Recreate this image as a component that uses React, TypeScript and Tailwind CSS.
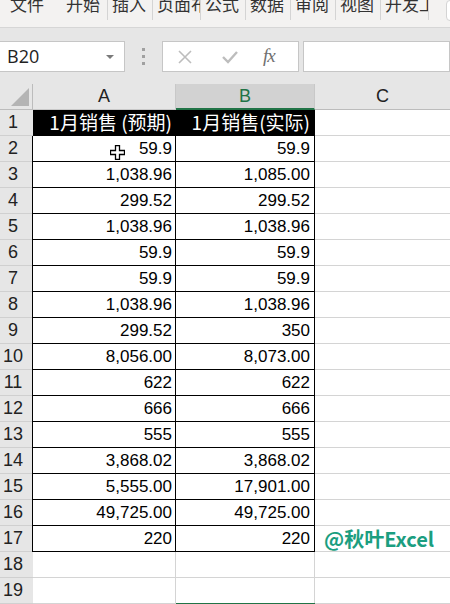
import React from "react";

const data: [string, string][] = [
  ["59.9", "59.9"],
  ["1,038.96", "1,085.00"],
  ["299.52", "299.52"],
  ["1,038.96", "1,038.96"],
  ["59.9", "59.9"],
  ["59.9", "59.9"],
  ["1,038.96", "1,038.96"],
  ["299.52", "350"],
  ["8,056.00", "8,073.00"],
  ["622", "622"],
  ["666", "666"],
  ["555", "555"],
  ["3,868.02", "3,868.02"],
  ["5,555.00", "17,901.00"],
  ["49,725.00", "49,725.00"],
  ["220", "220"],
];

const tabs = ["插入", "页面布局", "公式", "数据", "审阅", "视图", "开发工具"];

const cjk = { fontFamily: '"Noto Sans CJK SC", "Noto Sans", sans-serif' };
const cell = { fontFamily: '"Liberation Sans", "Noto Sans CJK SC", sans-serif' };

function MoveCursor() {
  return (
    <svg width="15" height="15" viewBox="0 0 15 15" className="absolute left-[77px] top-[9px]">
      <path
        d="M5.5 0.5h4v5h5v4h-5v5h-4v-5h-5v-4h5z"
        fill="#fff"
        stroke="#000"
        strokeWidth="1.3"
        strokeLinejoin="miter"
      />
    </svg>
  );
}

function RowHead({ n }: { n: number }) {
  return (
    <div className="h-[26px] bg-[#e6e6e6] border-b border-[#d0d0d0] flex items-center justify-center pr-[7px] text-[18px] text-[#222]">
      {n}
    </div>
  );
}

export default function App() {
  return (
    <div className="w-[450px] h-[604px] overflow-hidden bg-white relative" style={cell}>
      {/* ribbon tabs */}
      <div className="h-[27px] bg-[#f3f2f1] flex items-start text-[17px] text-[#333] overflow-hidden relative" style={cjk}>
        <div className="ml-[10px] -mt-[10px] leading-[28px] w-[56px]">文件</div>
        <div className="-mt-[10px] leading-[28px] w-[41px]">开始</div>
        {tabs.map((t, i) => (
          <div
            key={t}
            className={
              "h-[20px] border-l border-[#d4d4d4] pl-[4px] overflow-hidden whitespace-nowrap " +
              (i === 1 || i === 6 ? "w-[48px]" : "w-[45px]")
            }
          >
            <div className="-mt-[10px] leading-[28px]">{t}</div>
          </div>
        ))}
        <div className="h-[20px] border-l border-[#d4d4d4]" />
        <div className="absolute left-[446px] top-0 w-[20px] h-[21px] border border-[#d4d4d4] rounded-[4px] bg-white" />
      </div>

      {/* formula bar */}
      <div className="bg-[#e6e6e6] border-t border-[#d6d6d6] pt-[13px] pb-[12px] flex items-stretch">
        <div className="w-[126px] h-[31px] bg-white border border-[#c6c6c6] -ml-[1px] flex items-center justify-between pl-[7px] pr-[10px]">
          <span className="text-[18px] text-[#222]" style={{ fontFamily: '"Open Sans", sans-serif' }}>B20</span>
          <span className="w-0 h-0 border-l-[4px] border-r-[4px] border-t-[4px] border-l-transparent border-r-transparent border-t-[#7a7a7a]" />
        </div>
        <div className="w-[37px] flex flex-col items-center justify-center gap-[4px]">
          <span className="w-[3px] h-[3px] bg-[#a0a0a0]" />
          <span className="w-[3px] h-[3px] bg-[#a0a0a0]" />
          <span className="w-[3px] h-[3px] bg-[#a0a0a0]" />
        </div>
        <div className="w-[137px] h-[31px] bg-white border border-[#c6c6c6] flex items-center">
          <svg width="16" height="16" viewBox="0 0 16 16" className="ml-[14px]">
            <path d="M2 2l12 12M14 2L2 14" stroke="#bdbdbd" strokeWidth="1.6" />
          </svg>
          <svg width="18" height="16" viewBox="0 0 18 16" className="ml-[28px]">
            <path d="M2 8l5 5 9-10" stroke="#bdbdbd" strokeWidth="2.4" fill="none" />
          </svg>
          <span
            className="ml-[24px] text-[19px] italic text-[#707070] tracking-[-1px]"
            style={{ fontFamily: '"Liberation Serif", serif' }}
          >
            fx
          </span>
        </div>
        <div className="ml-[4px] flex-1 h-[31px] bg-white border border-[#c6c6c6]" />
      </div>

      {/* sheet */}
      <div className="grid grid-cols-[33px_143px_139px_1fr]">
        {/* header row */}
        <div className="h-[26px] bg-[#e6e6e6] border-r border-b border-[#bcbcbc] relative">
          <svg width="18" height="18" viewBox="0 0 18 18" className="absolute right-[3px] bottom-[3px]">
            <path d="M18 0V18H0z" fill="#b4b4b4" />
          </svg>
        </div>
        <div className="h-[26px] bg-[#e6e6e6] border-r border-b border-[#c8c8c8] flex items-center justify-center text-[18px] text-[#222]">A</div>
        <div className="h-[26px] bg-[#d2d2d2] border-r border-[#c8c8c8] border-b-2 border-b-[#217346] flex items-center justify-center text-[18px] text-[#217346]">B</div>
        <div className="h-[26px] bg-[#e6e6e6] border-b border-[#bcbcbc] flex items-center justify-center text-[18px] text-[#222]">C</div>

        {/* row 1 */}
        <RowHead n={1} />
        <div className="h-[26px] bg-black border-r border-b border-black flex items-center justify-end pr-[3px] text-[19px] text-white whitespace-nowrap" style={cjk}>
          1月销售 (预期)
        </div>
        <div className="h-[26px] bg-black border-r border-b border-black flex items-center justify-end pr-[4px] text-[19px] text-white whitespace-nowrap" style={cjk}>
          1月销售(实际)
        </div>
        <div className="h-[26px] border-b border-[#d4d4d4]" />

        {data.map(([a, b], i) => (
          <React.Fragment key={i}>
            <RowHead n={i + 2} />
            <div className="h-[26px] border-r border-b border-l border-black flex items-center justify-end pr-[3px] pt-[1px] text-[17px] text-black relative -ml-[1px]">
              {i === 0 && <MoveCursor />}
              {a}
            </div>
            <div className="h-[26px] border-r border-b border-black flex items-center justify-end pr-[4px] pt-[1px] text-[17px] text-black">
              {b}
            </div>
            <div className="h-[26px] border-b border-[#d4d4d4] flex items-center pl-[9px] overflow-visible">
              {i === 15 && (
                <span className="text-[20px] font-bold text-[#1b9e80] whitespace-nowrap leading-none" style={cjk}>
                  @秋叶Excel
                </span>
              )}
            </div>
          </React.Fragment>
        ))}

        {[18, 19].map((n) => (
          <React.Fragment key={n}>
            <RowHead n={n} />
            <div className="h-[26px] border-r border-b border-[#d4d4d4]" />
            <div className="h-[26px] border-r border-b border-[#d4d4d4]" />
            <div className="h-[26px] border-b border-[#d4d4d4]" />
          </React.Fragment>
        ))}

        <RowHead n={20} />
        <div className="h-[26px] border-r border-b border-[#d4d4d4]" />
        <div className="h-[26px] border-2 border-[#217346] -mt-[1px]" />
        <div className="h-[26px] border-b border-[#d4d4d4]" />
      </div>
    </div>
  );
}
